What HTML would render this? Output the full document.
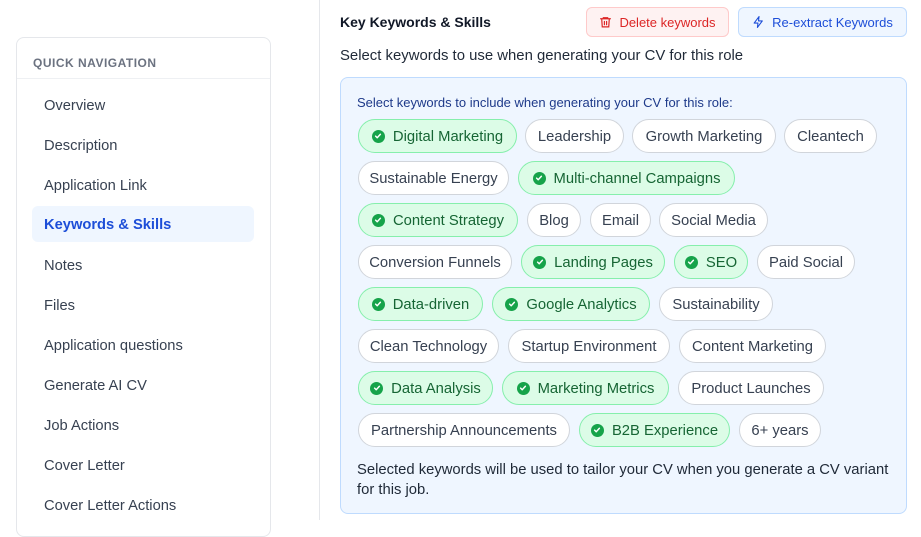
<!DOCTYPE html>
<html><head><meta charset="utf-8"><style>
*{box-sizing:border-box;margin:0;padding:0}
body{width:921px;height:520px;overflow:hidden;background:#fff;font-family:"Liberation Sans",Arial,sans-serif;position:relative;color:#1f2937}
.vline{position:absolute;left:319px;top:0;width:1px;height:520px;background:#e5e7eb}
.side{position:absolute;left:16px;top:37px;width:255px;height:500px;border:1px solid #e5e7eb;border-radius:8px;background:#fff}
.side h4{font-size:12px;letter-spacing:.5px;color:#6b7280;font-weight:700;padding:18px 0 0 16px;height:41px;border-bottom:1px solid #eef0f3}
.nav{position:absolute;left:32px;width:222px;height:36px;line-height:38px;padding-left:12px;font-size:14.7px;color:#374151;border-radius:6px}
.nav.act{background:#eff6ff;color:#1d4ed8;font-weight:700}
.title{position:absolute;left:340px;top:14px;font-size:14px;font-weight:700;color:#111827}
.btn{position:absolute;top:7px;height:30px;border-radius:6px;font-size:13px;display:flex;align-items:center;justify-content:center;gap:7px}
.del{left:586px;width:143px;background:#fef2f2;border:1px solid #fecaca;color:#dc2626}
.rex{left:738px;width:169px;background:#eff6ff;border:1px solid #bfdbfe;color:#1d4ed8}
.sub{position:absolute;left:340px;top:48px;font-size:14.9px;color:#1f2937}
.box{position:absolute;left:340px;top:77px;width:567px;height:437px;background:#eff6ff;border:1px solid #bfdbfe;border-radius:8px}
.inst{position:absolute;left:357px;top:95px;font-size:13px;color:#1e3a8a}
.chip{position:absolute;height:34px;border-radius:17px;border:1px solid #d1d5db;background:#fff;color:#374151;font-size:14.8px;display:flex;align-items:center;justify-content:center;gap:8px;white-space:nowrap}
.chip .t{position:relative;top:1px}
.chip.on{background:#dcfce7;border-color:#86efac;color:#166534}
.ck{width:13px;height:13px;border-radius:50%;background:#16a34a;display:inline-flex;align-items:center;justify-content:center}
.foot{position:absolute;left:357px;top:460px;width:545px;font-size:14.8px;line-height:20px;color:#1f2937}
</style></head><body>
<div class="vline"></div>
<div class="side"><h4>QUICK NAVIGATION</h4></div>
<div class="nav" style="top:87px">Overview</div>
<div class="nav" style="top:127px">Description</div>
<div class="nav" style="top:167px">Application Link</div>
<div class="nav act" style="top:206px">Keywords &amp; Skills</div>
<div class="nav" style="top:247px">Notes</div>
<div class="nav" style="top:287px">Files</div>
<div class="nav" style="top:327px">Application questions</div>
<div class="nav" style="top:367px">Generate AI CV</div>
<div class="nav" style="top:407px">Job Actions</div>
<div class="nav" style="top:447px">Cover Letter</div>
<div class="nav" style="top:487px">Cover Letter Actions</div>

<div class="title">Key Keywords &amp; Skills</div>
<div class="btn del"><svg width="13" height="14" viewBox="0 0 24 24" fill="none" stroke="#dc2626" stroke-width="2.2" stroke-linecap="round"><path d="M3 6h18M8 6V4h8v2M5 6l1 15h12l1-15M10 11v6M14 11v6"/></svg>Delete keywords</div>
<div class="btn rex"><svg width="13" height="14" viewBox="0 0 24 24" fill="none" stroke="#1d4ed8" stroke-width="2" stroke-linejoin="round"><path d="M13 2L4 14h7l-1 8 9-12h-7z"/></svg>Re-extract Keywords</div>
<div class="sub">Select keywords to use when generating your CV for this role</div>
<div class="box"></div>
<div class="inst">Select keywords to include when generating your CV for this role:</div>

<div id="chips"></div>
<div class="foot">Selected keywords will be used to tailor your CV when you generate a CV variant for this job.</div>
<script>
var rows=[
[[358,517,"Digital Marketing",1],[525,624,"Leadership"],[632,776,"Growth Marketing"],[784,877,"Cleantech"]],
[[358,509,"Sustainable Energy"],[518,735,"Multi-channel Campaigns",1]],
[[358,518,"Content Strategy",1],[527,581,"Blog"],[590,651,"Email"],[659,768,"Social Media"]],
[[358,512,"Conversion Funnels"],[521,665,"Landing Pages",1],[674,748,"SEO",1],[757,855,"Paid Social"]],
[[358,483,"Data-driven",1],[492,650,"Google Analytics",1],[659,773,"Sustainability"]],
[[358,499,"Clean Technology"],[508,670,"Startup Environment"],[679,826,"Content Marketing"]],
[[358,493,"Data Analysis",1],[502,669,"Marketing Metrics",1],[678,824,"Product Launches"]],
[[358,570,"Partnership Announcements"],[579,730,"B2B Experience",1],[739,821,"6+ years"]]];
var h="";
rows.forEach(function(r,i){var t=119+i*42;r.forEach(function(c){
h+='<div class="chip'+(c[3]?' on':'')+'" style="left:'+c[0]+'px;top:'+t+'px;width:'+(c[1]-c[0])+'px">'+(c[3]?'<span class="ck"><svg width="8" height="8" viewBox="0 0 10 10"><path d="M2 5.2l2 2 4-4.4" fill="none" stroke="#fff" stroke-width="1.8" stroke-linecap="round" stroke-linejoin="round"/></svg></span>':'')+'<span class="t">'+c[2]+'</span></div>';});});
document.getElementById("chips").innerHTML=h;
</script>
</body></html>
